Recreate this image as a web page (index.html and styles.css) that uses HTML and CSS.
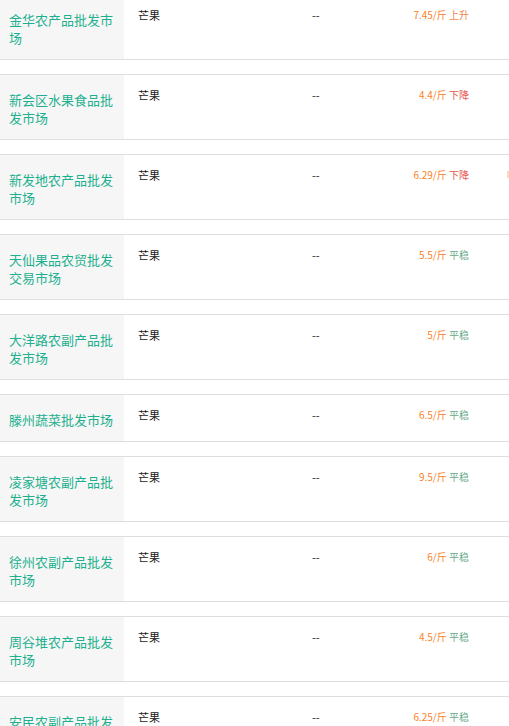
FILE: index.html
```html
<!DOCTYPE html>
<html lang="zh-CN">
<head>
<meta charset="utf-8">
<link rel="stylesheet" href="styles.css">
</head>
<body>
<div class="list">
  <div class="row"><div class="name">金华农产品批发市场</div><div class="prod">芒果</div><div class="dash">--</div><div class="price"><span class="num">7.45/斤</span> <span class="up">上升</span></div></div>
  <div class="row"><div class="name">新会区水果食品批发市场</div><div class="prod">芒果</div><div class="dash">--</div><div class="price"><span class="num">4.4/斤</span> <span class="down">下降</span></div></div>
  <div class="row"><div class="name">新发地农产品批发市场</div><div class="prod">芒果</div><div class="dash">--</div><div class="price"><span class="num">6.29/斤</span> <span class="down">下降</span></div><span class="edge"></span></div>
  <div class="row"><div class="name">天仙果品农贸批发交易市场</div><div class="prod">芒果</div><div class="dash">--</div><div class="price"><span class="num">5.5/斤</span> <span class="flat">平稳</span></div></div>
  <div class="row"><div class="name">大洋路农副产品批发市场</div><div class="prod">芒果</div><div class="dash">--</div><div class="price"><span class="num">5/斤</span> <span class="flat">平稳</span></div></div>
  <div class="row"><div class="name">滕州蔬菜批发市场</div><div class="prod">芒果</div><div class="dash">--</div><div class="price"><span class="num">6.5/斤</span> <span class="flat">平稳</span></div></div>
  <div class="row"><div class="name">凌家塘农副产品批发市场</div><div class="prod">芒果</div><div class="dash">--</div><div class="price"><span class="num">9.5/斤</span> <span class="flat">平稳</span></div></div>
  <div class="row"><div class="name">徐州农副产品批发市场</div><div class="prod">芒果</div><div class="dash">--</div><div class="price"><span class="num">6/斤</span> <span class="flat">平稳</span></div></div>
  <div class="row"><div class="name">周谷堆农产品批发市场</div><div class="prod">芒果</div><div class="dash">--</div><div class="price"><span class="num">4.5/斤</span> <span class="flat">平稳</span></div></div>
  <div class="row"><div class="name">安民农副产品批发市场</div><div class="prod">芒果</div><div class="dash">--</div><div class="price"><span class="num">6.25/斤</span> <span class="flat">平稳</span></div></div>
</div>
</body>
</html>
```
FILE: styles.css
```css
html, body {
  margin: 0;
  padding: 0;
  background: #fff;
  overflow: hidden;
}
body {
  font-family: "Noto Sans CJK SC", "Noto Sans", sans-serif;
}
.list {
  margin-top: -6px;
  display: flex;
  flex-direction: column;
  gap: 14px;
}
.row {
  position: relative;
  display: grid;
  grid-template-columns: 124px 188px 1fr auto;
  border-top: 1px solid #dedede;
  border-bottom: 1px solid #dedede;
}
.name {
  background: #f6f6f6;
  color: #1cb08e;
  font-size: 13px;
  line-height: 18px;
  padding: 16px 9px 12px 9px;
}
.prod, .dash, .price {
  font-size: 11px;
  line-height: 16px;
  padding-top: 12px;
  color: #222;
}
.prod {
  padding-left: 14px;
}
.price {
  font-size: 10px;
  text-align: right;
  padding-right: 40px;
  white-space: nowrap;
}
.num { color: #fb7f27; }
.up { color: #f1844a; }
.down { color: #e4584f; }
.flat { color: #6aaa8a; }
.edge {
  position: absolute;
  right: 0;
  top: 16px;
  width: 2px;
  height: 7px;
  background: #fbd9bd;
}
```
